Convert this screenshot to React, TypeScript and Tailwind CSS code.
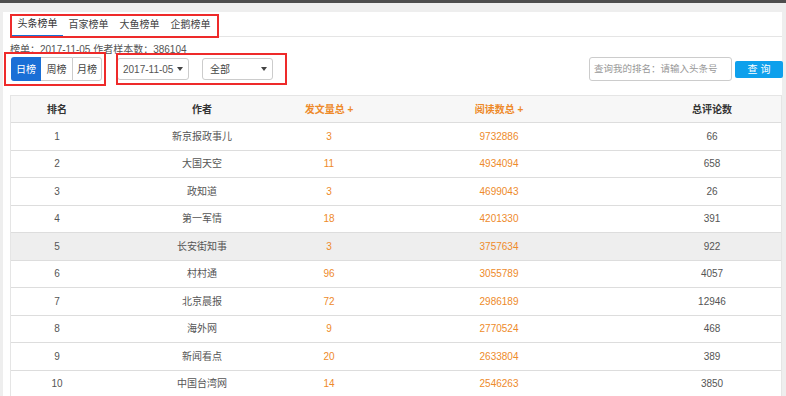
const rows = [
  { rank: 1, author: '新京报政事儿', posts: 3, reads: 9732886, comments: 66 },
  { rank: 2, author: '大国天空', posts: 11, reads: 4934094, comments: 658 },
  { rank: 3, author: '政知道', posts: 3, reads: 4699043, comments: 26 },
  { rank: 4, author: '第一军情', posts: 18, reads: 4201330, comments: 391 },
  { rank: 5, author: '长安街知事', posts: 3, reads: 3757634, comments: 922 },
  { rank: 6, author: '村村通', posts: 96, reads: 3055789, comments: 4057 },
  { rank: 7, author: '北京晨报', posts: 72, reads: 2986189, comments: 12946 },
  { rank: 8, author: '海外网', posts: 9, reads: 2770524, comments: 468 },
  { rank: 9, author: '新闻看点', posts: 20, reads: 2633804, comments: 389 },
  { rank: 10, author: '中国台湾网', posts: 14, reads: 2546263, comments: 3850 },
];

const tabs = ['头条榜单', '百家榜单', '大鱼榜单', '企鹅榜单'];

function Caret() {
  return (
    <svg width="6" height="4" viewBox="0 0 6 4" className="shrink-0">
      <path d="M0 0h6L3 4z" fill="#444" />
    </svg>
  );
}

const grid = 'grid grid-cols-[92px_198px_56px_284px_142px]';

export default function App() {
  return (
    <div className="relative h-[396px] w-[786px] overflow-hidden bg-[#eeeeee] border-t-[3px] border-[#4d4d4d] pl-[3px] pr-[4px] font-['Liberation_Sans','Noto_Sans_CJK_SC',sans-serif] text-[#555]">
      <div className="h-full bg-white pl-[7px]">
        {/* tabs */}
        <div className="mt-[9px] flex h-[25px] border-b border-[#e5e5e5]">
          {tabs.map((t, i) => (
            <div
              key={t}
              className={
                'flex w-[51px] items-center justify-center text-[10px] ' +
                (i === 0 ? '-mb-px ml-[2px] border-b-2 border-[#1a6fd6] text-[#333]' : 'text-[#444]')
              }
            >
              {t}
            </div>
          ))}
        </div>

        <div className="mt-[7px] h-[12px] text-[10px] leading-[12px] text-[#555]">
          榜单：2017-11-05 作者样本数：386104
        </div>

        {/* controls */}
        <div className="mt-[1px] flex h-[24px] items-center">
          <div className="ml-[1px] flex h-[24px] text-[10px]">
            <button className="w-[30px] rounded-l-[3px] bg-[#1a6fd6] text-white">日榜</button>
            <button className="w-[31px] border-y border-[#ccc] text-[#444]">周榜</button>
            <button className="w-[30px] rounded-r-[3px] border border-[#ccc] text-[#444]">月榜</button>
          </div>
          <div className="ml-[15px] flex h-[22px] w-[72px] items-center justify-between rounded-[3px] border border-[#ccc] pl-[5px] pr-[5px] text-[10px] text-[#555]">
            <span>2017-11-05</span>
            <Caret />
          </div>
          <div className="ml-[13px] flex h-[22px] w-[71px] items-center justify-between rounded-[3px] border border-[#ccc] pl-[7px] pr-[5px] text-[10px] text-[#444]">
            <span>全部</span>
            <Caret />
          </div>
          <div className="ml-auto flex h-[24px] w-[143px] items-center rounded-[3px] border border-[#ccc] pl-[4px] text-[9.5px] text-[#999]">
            查询我的排名：请输入头条号
          </div>
          <button className="ml-[3px] mr-[-1px] h-[17px] w-[48px] rounded-[2px] bg-[#0ea0ec] text-[10px] text-white">
            查 询
          </button>
        </div>

        {/* table */}
        <div className="mt-[14px] border border-[#e5e5e5] text-[10px]">
          <div className={grid + ' h-[27px] items-center border-b border-[#ddd] bg-[#f7f7f7] text-center font-bold'}>
            <div className="text-[#333]">排名</div>
            <div className="text-[#333]">作者</div>
            <div className="text-[#ee8a2a]">发文量总 +</div>
            <div className="text-[#ee8a2a]">阅读数总 +</div>
            <div className="text-[#333]">总评论数</div>
          </div>
          {rows.map((r) => (
            <div
              key={r.rank}
              className={
                grid +
                ' h-[27.5px] items-center border-b border-[#ddd] text-center ' +
                (r.rank === 5 ? 'bg-[#eeeeee]' : 'bg-white')
              }
            >
              <div>{r.rank}</div>
              <div>{r.author}</div>
              <div className="text-[#ee8a2a]">{r.posts}</div>
              <div className="text-[#ee8a2a]">{r.reads}</div>
              <div>{r.comments}</div>
            </div>
          ))}
        </div>
      </div>

      {/* red annotation boxes */}
      <div className="pointer-events-none absolute left-[10px] top-[11px] h-[24px] w-[209px] border-2 border-[#ee2a2a]" />
      <div className="pointer-events-none absolute left-[4px] top-[49px] h-[34px] w-[102px] border-2 border-[#ee2a2a]" />
      <div className="pointer-events-none absolute left-[116px] top-[50px] h-[32px] w-[171px] border-2 border-[#ee2a2a]" />
    </div>
  );
}
